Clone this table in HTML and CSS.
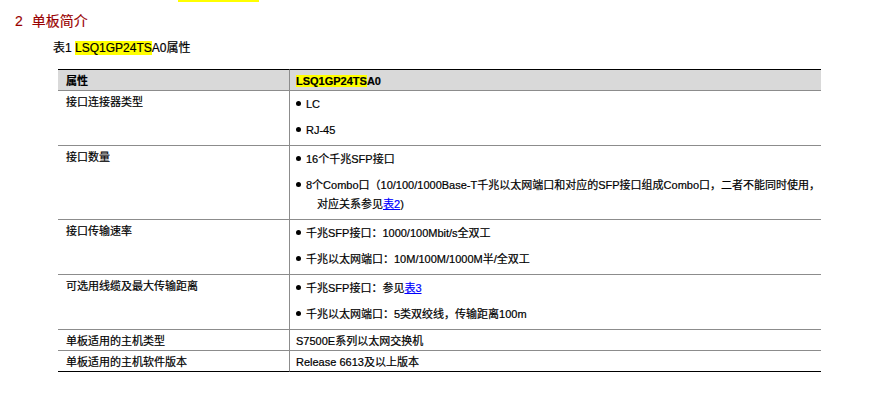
FILE: index.html
```html
<!DOCTYPE html>
<html lang="zh-CN">
<head>
<meta charset="utf-8">
<title>单板简介</title>
<link rel="stylesheet" href="styles.css">
</head>
<body>
<div class="topmark"></div>
<h2 class="heading"><span class="num">2</span>单板简介</h2>
<p class="caption">表1 <span class="hl">LSQ1GP24TS</span>A0属性</p>
<table class="spec">
  <colgroup><col class="col1"><col class="col2"></colgroup>
  <thead>
    <tr><th class="c1">属性</th><th class="c2"><span class="hl">LSQ1GP24TS</span>A0</th></tr>
  </thead>
  <tbody>
    <tr>
      <td class="c1">接口连接器类型</td>
      <td class="c2"><ul class="list"><li><span class="dot"></span>LC</li><li><span class="dot"></span>RJ-45</li></ul></td>
    </tr>
    <tr>
      <td class="c1">接口数量</td>
      <td class="c2"><ul class="list"><li><span class="dot"></span>16个千兆SFP接口</li><li><span class="dot"></span>8个Combo口（10/100/1000Base-T千兆以太网端口和对应的SFP接口组成Combo口，二者不能同时使用，<span class="cont">对应关系参见<a href="#" class="link">表2</a>)</span></li></ul></td>
    </tr>
    <tr>
      <td class="c1">接口传输速率</td>
      <td class="c2"><ul class="list"><li><span class="dot"></span>千兆SFP接口：1000/100Mbit/s全双工</li><li><span class="dot"></span>千兆以太网端口：10M/100M/1000M半/全双工</li></ul></td>
    </tr>
    <tr>
      <td class="c1">可选用线缆及最大传输距离</td>
      <td class="c2"><ul class="list"><li><span class="dot"></span>千兆SFP接口：参见<a href="#" class="link">表3</a></li><li><span class="dot"></span>千兆以太网端口：5类双绞线，传输距离100m</li></ul></td>
    </tr>
    <tr>
      <td class="c1">单板适用的主机类型</td>
      <td class="c2 plain">S7500E系列以太网交换机</td>
    </tr>
    <tr class="last">
      <td class="c1">单板适用的主机软件版本</td>
      <td class="c2 plain">Release 6613及以上版本</td>
    </tr>
  </tbody>
</table>
</body>
</html>
```
FILE: styles.css
```css
html, body {
  margin: 0;
  padding: 0;
  background: #fff;
}
body {
  font-family: "Liberation Sans", "Noto Sans CJK SC", sans-serif;
  color: #000;
}
.topmark {
  width: 81px;
  height: 2px;
  margin-left: 178px;
  background: #ffff00;
}
.heading {
  margin: 9px 0 0 15px;
  font-size: 14px;
  line-height: 20px;
  font-weight: normal;
  color: #990000;
  -webkit-text-stroke: 0.15px #990000;
}
.heading .num {
  margin-right: 9px;
}
.caption {
  margin: 8px 0 0 53px;
  font-size: 12px;
  line-height: 18px;
  -webkit-text-stroke: 0.2px #000;
}
.hl {
  background: #ffff00;
}
.spec {
  margin: 12px 0 0 58px;
  width: 763px;
  table-layout: fixed;
  border-collapse: separate;
  border-spacing: 0;
  font-size: 11px;
}
.col1 { width: 231px; }
.col2 { width: 532px; }
.spec th, .spec td {
  text-align: left;
  vertical-align: top;
  line-height: 16px;
  padding: 3px 7px 1px 8px;
  border-bottom: 1px solid #8c8c8c;
  -webkit-text-stroke: 0.2px #000;
}
.spec th {
  background: #d9d9d9;
  border-top: 1px solid #000;
  font-weight: bold;
}
.spec .c2 {
  border-left: 1px solid #8c8c8c;
  padding-left: 6px;
}
.spec .last td {
  border-bottom: 1px solid #000;
}
.list {
  list-style: none;
  margin: 1px 0 4px 0;
  padding: 0;
  display: flex;
  flex-direction: column;
  gap: 7px;
}
.list li {
  line-height: 19px;
  white-space: nowrap;
}
.dot {
  display: inline-block;
  width: 5px;
  height: 5px;
  border-radius: 50%;
  background: #000;
  margin-right: 5px;
  vertical-align: 2px;
}
.cont {
  display: block;
  padding-left: 21px;
}
.link {
  color: #0000ff;
  text-decoration: underline;
  -webkit-text-stroke: 0.2px #0000ff;
}
```
